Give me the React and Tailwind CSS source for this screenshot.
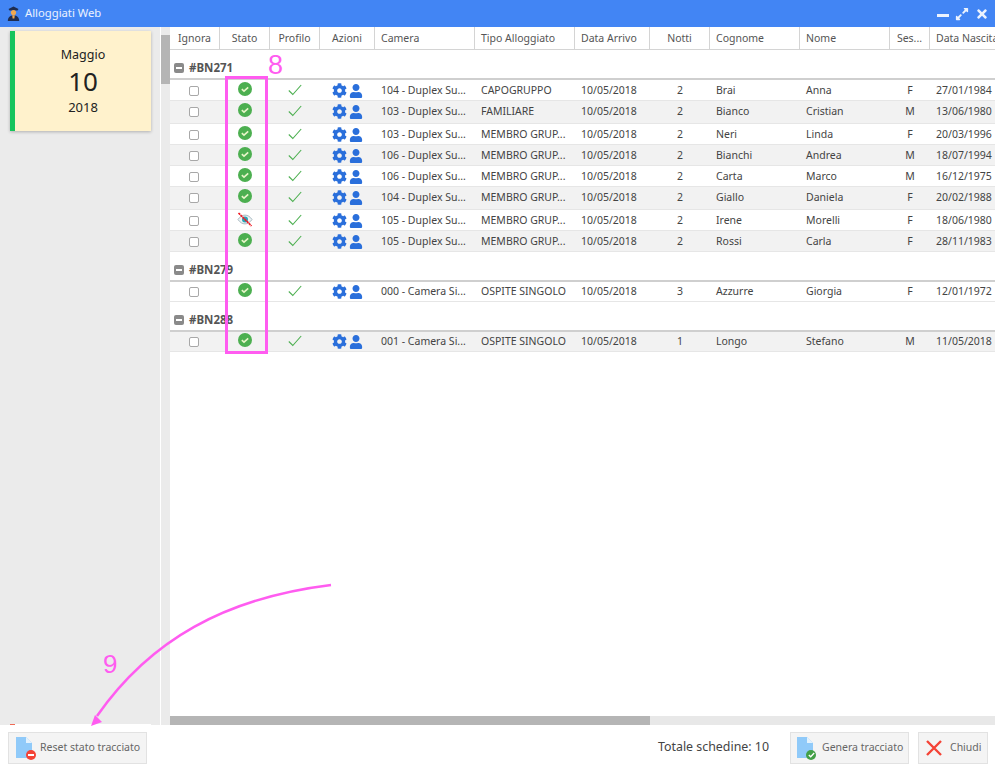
import React from 'react';
import { FaCog, FaUser, FaExpandAlt, FaTimes } from 'react-icons/fa';

const columns = [
  { name: 'Ignora', w: 'w-[50px]', center: true },
  { name: 'Stato', w: 'w-[50px]', center: true },
  { name: 'Profilo', w: 'w-[50px]', center: true },
  { name: 'Azioni', w: 'w-[55px]', center: true },
  { name: 'Camera', w: 'w-[100px]' },
  { name: 'Tipo Alloggiato', w: 'w-[100px]' },
  { name: 'Data Arrivo', w: 'w-[75px]' },
  { name: 'Notti', w: 'w-[60px]', center: true },
  { name: 'Cognome', w: 'w-[90px]' },
  { name: 'Nome', w: 'w-[90px]' },
  { name: 'Ses...', w: 'w-[40px]', center: true },
  { name: 'Data Nascita', w: 'w-[100px]' },
];

const groups = [
  {
    id: '#BN271',
    rows: [
      { room: '104 - Duplex Su...', type: 'CAPOGRUPPO', n: 2, last: 'Brai', first: 'Anna', sex: 'F', born: '27/01/1984', h: 'h-[21px]' },
      { room: '103 - Duplex Su...', type: 'FAMILIARE', n: 2, last: 'Bianco', first: 'Cristian', sex: 'M', born: '13/06/1980', h: 'h-[23px]', alt: true },
      { room: '103 - Duplex Su...', type: 'MEMBRO GRUP...', n: 2, last: 'Neri', first: 'Linda', sex: 'F', born: '20/03/1996', h: 'h-[21px]' },
      { room: '106 - Duplex Su...', type: 'MEMBRO GRUP...', n: 2, last: 'Bianchi', first: 'Andrea', sex: 'M', born: '18/07/1994', h: 'h-[21px]', alt: true },
      { room: '106 - Duplex Su...', type: 'MEMBRO GRUP...', n: 2, last: 'Carta', first: 'Marco', sex: 'M', born: '16/12/1975', h: 'h-[21px]' },
      { room: '104 - Duplex Su...', type: 'MEMBRO GRUP...', n: 2, last: 'Giallo', first: 'Daniela', sex: 'F', born: '20/02/1988', h: 'h-[23px]', alt: true },
      { room: '105 - Duplex Su...', type: 'MEMBRO GRUP...', n: 2, last: 'Irene', first: 'Morelli', sex: 'F', born: '18/06/1980', h: 'h-[21px]', hidden: true },
      { room: '105 - Duplex Su...', type: 'MEMBRO GRUP...', n: 2, last: 'Rossi', first: 'Carla', sex: 'F', born: '28/11/1983', h: 'h-[21px]', alt: true },
    ],
  },
  {
    id: '#BN279',
    rows: [
      { room: '000 - Camera Si...', type: 'OSPITE SINGOLO', n: 3, last: 'Azzurre', first: 'Giorgia', sex: 'F', born: '12/01/1972', h: 'h-[20px]', tight: true },
    ],
  },
  {
    id: '#BN288',
    rows: [
      { room: '001 - Camera Si...', type: 'OSPITE SINGOLO', n: 1, last: 'Longo', first: 'Stefano', sex: 'M', born: '11/05/2018', h: 'h-[20px]', alt: true, tight: true },
    ],
  },
];

const StatusOk = () => (
  <svg width="14" height="14" viewBox="0 0 14 14" className="-mt-[3px]">
    <circle cx="7" cy="7" r="7" fill="#4caf50" />
    <path d="M3.8 7.2l2.2 2 4.2-3.9" fill="none" stroke="#e8f5c8" strokeWidth="1.6" />
  </svg>
);

const StatusHidden = () => (
  <svg width="16" height="15" viewBox="0 0 16 15" className="-mt-[3px]">
    <path d="M1 7.5c2-3 4.5-4.4 7-4.4s5 1.4 7 4.4c-2 3-4.5 4.4-7 4.4S3 10.5 1 7.5z" fill="#eef3f5" stroke="#a9bac2" />
    <circle cx="8" cy="7.5" r="3" fill="#26a6b8" />
    <path d="M1.5 1l13 13" stroke="#ef1c25" strokeWidth="1.7" strokeDasharray="2.4 .5" />
  </svg>
);

const FileIcon = ({ children }) => (
  <span className="relative block w-[17px] h-[21px]">
    <svg width="16" height="21" viewBox="0 0 16 21" className="block">
      <path d="M0 0h10l6 6v15H0z" fill="#90caf9" />
      <path d="M10 0l6 6h-6z" fill="#e3f2fd" />
    </svg>
    {children}
  </span>
);

const Collapse = () => (
  <span className="flex items-center justify-center w-[10px] h-[10px] rounded-[2px] bg-[#8a8a8a]">
    <span className="block w-[6px] h-[2px] bg-white" />
  </span>
);

const Cell = ({ col, tight, children }) => (
  <div className={`${col.w} ${tight ? 'h-[19px]' : 'h-[21px]'} shrink-0 flex items-center px-[6px] whitespace-nowrap ${col.center ? 'justify-center' : ''}`}>
    {children}
  </div>
);

const Row = ({ r }) => {
  const cells = [
    <span className="block w-[10px] h-[10px] -ml-[2px] rounded-[2px] border border-[#a8a8a8] bg-white" />,
    r.hidden ? <StatusHidden /> : <StatusOk />,
    <svg width="14" height="12" viewBox="0 0 14 12" className="-mt-[2px]">
      <path d="M.8 6.5l4 4L13.2 1" fill="none" stroke="#4caf50" strokeWidth="1.1" />
    </svg>,
    <span className="flex items-center gap-[2px] text-[#2a6fdb]">
      <FaCog size={15} />
      <FaUser size={14} />
    </span>,
    r.room,
    r.type,
    '10/05/2018',
    r.n,
    r.last,
    r.first,
    r.sex,
    r.born,
  ];
  return (
    <div className={`flex items-start w-max border-b border-[#e6e6e6] ${r.h} ${r.alt ? 'bg-[#f2f2f2]' : 'bg-white'}`}>
      {cells.map((c, i) => (
        <Cell key={i} col={columns[i]} tight={r.tight}>{c}</Cell>
      ))}
    </div>
  );
};

export default function App() {
  return (
    <div className="relative h-screen w-full overflow-hidden flex flex-col bg-white text-[10.5px] text-[#444] font-['Noto_Sans',sans-serif]">
      {/* Title bar */}
      <div className="h-[27px] shrink-0 flex items-center justify-between bg-[#4285f4] pl-[7px] pr-[6px]">
        <div className="flex items-center gap-[5px] text-white/90 text-[11.25px]">
          <svg width="13" height="15" viewBox="0 0 13 15">
            <path d="M1.5 3L6.5.5l5 2.5-1 1.4h-8z" fill="#1f2d50" />
            <circle cx="6.5" cy="6.5" r="2.6" fill="#f0a850" />
            <path d="M.8 15c0-3.6 2-5.6 5.7-5.6s5.7 2 5.7 5.6z" fill="#1f2d50" />
            <path d="M5.2 9.2h2.6l-.4 3.2H5.6z" fill="#f0a850" />
          </svg>
          <span>Alloggiati Web</span>
        </div>
        <div className="flex items-center gap-[6px] text-white/90">
          <span className="block w-[12px] h-[3px] mt-[3px] bg-white/90" />
          <FaExpandAlt size={14} />
          <FaTimes size={14} />
        </div>
      </div>

      <div className="flex-1 min-h-0 flex">
        {/* Side list */}
        <div className="w-[160px] shrink-0 overflow-hidden flex flex-col justify-between bg-[#ebebeb] pt-[4px] pl-[10px] pr-[9px]">
          <div className="h-[100px] flex flex-col items-center bg-[#fff2cc] border-l-[5px] border-[#16c45c] shadow-[0_1px_3px_rgba(0,0,0,0.25)] text-[#222]">
            <span className="mt-[14px] text-[12.5px] leading-[19px]">Maggio</span>
            <span className="text-[26px] leading-[34px]">10</span>
            <span className="text-[13px] leading-[19px]">2018</span>
          </div>
          <div className="h-[1px] flex bg-white">
            <span className="block w-[5px] bg-[#ef6a55]" />
          </div>
        </div>
        <div className="w-[1px] shrink-0 bg-white" />
        <div className="w-[9px] shrink-0 pt-[8px] bg-[#ebebeb]">
          <div className="h-[49px] bg-[#b5b5b5]" />
        </div>

        {/* Grid */}
        <div className="flex-1 min-w-0 flex flex-col">
          <div className="flex-1 min-h-0 overflow-hidden">
            <div className="flex w-max h-[23px] border-b border-[#d4d4d4] text-[#555]">
              {columns.map((c) => (
                <div key={c.name} className={`${c.w} shrink-0 flex items-center px-[6px] pt-[1px] border-r border-[#d4d4d4] whitespace-nowrap ${c.center ? 'justify-center' : ''}`}>
                  {c.name}
                </div>
              ))}
            </div>
            {groups.map((g) => (
              <div key={g.id}>
                <div className="h-[30px] flex items-center gap-[5px] pl-[4px] pt-[7px] border-b-2 border-[#cfcfcf] font-bold text-[11.5px] text-[#555]">
                  <Collapse />
                  <span>{g.id}</span>
                </div>
                {g.rows.map((r, i) => (
                  <Row key={i} r={r} />
                ))}
              </div>
            ))}
          </div>
          <div className="h-[9px] shrink-0 bg-[#e8e8e8]">
            <div className="h-full w-[480px] bg-[#b5b5b5]" />
          </div>
        </div>
      </div>

      {/* Footer */}
      <div className="h-[44px] shrink-0 flex items-center bg-white pl-[8px] pr-[7px] pt-[1px] text-[#666]">
        <button className="h-[32px] w-[139px] flex items-center gap-[7px] pl-[7px] bg-[#f4f4f4] border border-[#e2e2e2]">
          <FileIcon>
            <span className="absolute -right-[3px] -bottom-[2px] flex items-center justify-center w-[10px] h-[10px] rounded-full bg-[#f44336]">
              <span className="block w-[6px] h-[2px] bg-white" />
            </span>
          </FileIcon>
          <span>Reset stato tracciato</span>
        </button>
        <span className="ml-auto mr-[21px] text-[12.4px] text-[#444]">Totale schedine: 10</span>
        <button className="h-[32px] w-[119px] flex items-center gap-[8px] pl-[6px] bg-[#f4f4f4] border border-[#e2e2e2]">
          <FileIcon>
            <span className="absolute -right-[2px] -bottom-[2px] flex items-center justify-center w-[10px] h-[10px] rounded-full bg-[#43a047]">
              <svg width="7" height="6" viewBox="0 0 7 6">
                <path d="M.8 3l1.9 1.8L6.2 1" fill="none" stroke="#fff" strokeWidth="1.3" />
              </svg>
            </span>
          </FileIcon>
          <span>Genera tracciato</span>
        </button>
        <button className="ml-[9px] h-[32px] w-[70px] flex items-center gap-[8px] pl-[7px] bg-[#f4f4f4] border border-[#e2e2e2]">
          <svg width="16" height="16" viewBox="0 0 16 16">
            <path d="M1 1l14 14M15 1L1 15" stroke="#f44336" strokeWidth="2.4" />
          </svg>
          <span>Chiudi</span>
        </button>
      </div>

      {/* Annotations drawn on top of the screenshot */}
      <div className="absolute left-[225px] top-[76px] w-[43px] h-[278px] border-[3px] border-[#ff5cf0] pointer-events-none" />
      <span className="absolute left-[268px] top-[50px] text-[27px] leading-[30px] text-[#ff5cf0] font-['Liberation_Sans',sans-serif]">8</span>
      <span className="absolute left-[103px] top-[649px] text-[26px] leading-[30px] text-[#ff5cf0] font-['Liberation_Sans',sans-serif]">9</span>
      <svg className="absolute left-0 top-0 pointer-events-none" width="995" height="769" viewBox="0 0 995 769">
        <path d="M331 585C225 598 150 640 97 716" fill="none" stroke="#ff5cf0" strokeWidth="2.5" />
        <path d="M91 726l4-11 7 7z" fill="#ff5cf0" />
      </svg>
    </div>
  );
}
